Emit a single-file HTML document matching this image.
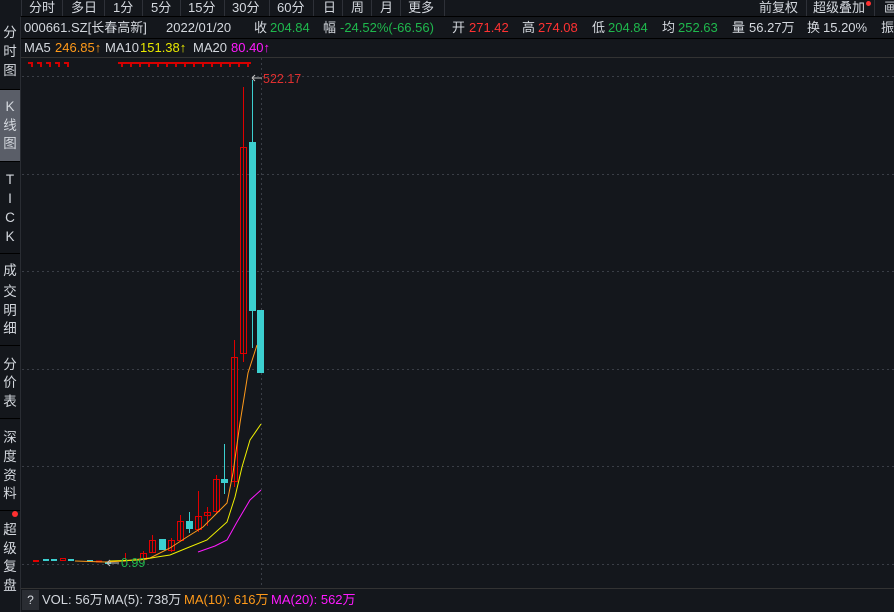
<!DOCTYPE html>
<html><head><meta charset="utf-8"><style>
*{margin:0;padding:0;box-sizing:border-box}
body{width:894px;height:612px;background:#14171c;color:#d4d8de;font-family:"Liberation Sans","Noto Sans CJK SC",sans-serif;font-size:13px;overflow:hidden;position:relative}
.a{position:absolute;white-space:nowrap;line-height:16px}
.g{color:#1fb84d}.r{color:#ff3232}.o{color:#ff9a1a}.y{color:#e8e800}.m{color:#ff1aff}
.sep{position:absolute;top:0;width:1px;height:16px;background:#2e3138}
.sc{position:absolute;left:0;width:20px;text-align:center;font-size:13.5px;line-height:16px}
.hs{position:absolute;left:0;width:20px;height:1px;background:#000}
</style></head><body>
<div class="a" style="left:29px;top:0">分时</div><div class="sep" style="left:62px"></div>
<div class="a" style="left:71px;top:0">多日</div><div class="sep" style="left:104px"></div>
<div class="a" style="left:113px;top:0">1分</div><div class="sep" style="left:142px"></div>
<div class="a" style="left:151px;top:0">5分</div><div class="sep" style="left:180px"></div>
<div class="a" style="left:188px;top:0">15分</div><div class="sep" style="left:224px"></div>
<div class="a" style="left:232px;top:0">30分</div><div class="sep" style="left:269px"></div>
<div class="a" style="left:277px;top:0">60分</div><div class="sep" style="left:313px"></div>
<div class="a" style="left:323px;top:0">日</div><div class="sep" style="left:342px"></div>
<div class="a" style="left:351px;top:0">周</div><div class="sep" style="left:371px"></div>
<div class="a" style="left:380px;top:0">月</div><div class="sep" style="left:400px"></div>
<div class="a" style="left:408px;top:0">更多</div><div class="sep" style="left:444px"></div>
<div class="sep" style="left:21px"></div>
<div class="a" style="left:759px;top:0">前复权</div><div class="sep" style="left:806px"></div>
<div class="a" style="left:813px;top:0">超级叠加</div>
<div style="position:absolute;left:866px;top:1px;width:5px;height:5px;border-radius:50%;background:#ff3030"></div>
<div class="sep" style="left:874px"></div>
<div class="a" style="left:884px;top:0">画</div>
<div style="position:absolute;left:21px;top:16px;width:873px;height:1px;background:#000"></div>

<div style="position:absolute;left:0;top:17px;width:21px;height:595px;border-right:1px solid #2a2d33"></div>
<div style="position:absolute;left:0;top:90px;width:20px;height:71px;background:#5a5e68"></div>
<div class="hs" style="top:89px"></div><div class="hs" style="top:161px"></div><div class="hs" style="top:253px"></div><div class="hs" style="top:345px"></div><div class="hs" style="top:418px"></div><div class="hs" style="top:510px"></div>
<div class="sc" style="top:25px">分</div><div class="sc" style="top:44px">时</div><div class="sc" style="top:63px">图</div>
<div class="sc" style="top:99px">K</div><div class="sc" style="top:118px">线</div><div class="sc" style="top:136px">图</div>
<div class="sc" style="top:172px">T</div><div class="sc" style="top:191px">I</div><div class="sc" style="top:210px">C</div><div class="sc" style="top:229px">K</div>
<div class="sc" style="top:263px">成</div><div class="sc" style="top:284px">交</div><div class="sc" style="top:303px">明</div><div class="sc" style="top:321px">细</div>
<div class="sc" style="top:357px">分</div><div class="sc" style="top:375px">价</div><div class="sc" style="top:394px">表</div>
<div class="sc" style="top:430px">深</div><div class="sc" style="top:449px">度</div><div class="sc" style="top:468px">资</div><div class="sc" style="top:486px">料</div>
<div class="sc" style="top:522px">超</div><div class="sc" style="top:541px">级</div><div class="sc" style="top:559px">复</div><div class="sc" style="top:578px">盘</div>
<div style="position:absolute;left:12px;top:511px;width:6px;height:6px;border-radius:50%;background:#ff3030"></div>

<div class="a" style="left:24px;top:20px">000661.SZ[长春高新]</div>
<div class="a" style="left:166px;top:20px">2022/01/20</div>
<div class="a" style="left:254px;top:20px">收</div><div class="a g" style="left:270px;top:20px">204.84</div>
<div class="a" style="left:323px;top:20px">幅</div><div class="a g" style="left:340px;top:20px">-24.52%(-66.56)</div>
<div class="a" style="left:452px;top:20px">开</div><div class="a r" style="left:469px;top:20px">271.42</div>
<div class="a" style="left:522px;top:20px">高</div><div class="a r" style="left:538px;top:20px">274.08</div>
<div class="a" style="left:592px;top:20px">低</div><div class="a g" style="left:608px;top:20px">204.84</div>
<div class="a" style="left:662px;top:20px">均</div><div class="a g" style="left:678px;top:20px">252.63</div>
<div class="a" style="left:732px;top:20px">量</div><div class="a" style="left:749px;top:20px">56.27万</div>
<div class="a" style="left:807px;top:20px">换</div><div class="a" style="left:823px;top:20px">15.20%</div>
<div class="a" style="left:881px;top:20px">振</div>
<div style="position:absolute;left:21px;top:38px;width:873px;height:1px;background:#000"></div>
<div class="a" style="left:24px;top:40px">MA5</div><div class="a o" style="left:55px;top:40px">246.85↑</div>
<div class="a" style="left:105px;top:40px">MA10</div><div class="a y" style="left:140px;top:40px">151.38↑</div>
<div class="a" style="left:193px;top:40px">MA20</div><div class="a m" style="left:231px;top:40px">80.40↑</div>
<div style="position:absolute;left:21px;top:57px;width:873px;height:1px;background:#333"></div>
<svg style="position:absolute;left:0;top:0" width="894" height="612">
<g stroke="#3a3e46" stroke-dasharray="2,3" stroke-width="1">
<line x1="22" y1="76.5" x2="894" y2="76.5"/><line x1="22" y1="174.5" x2="894" y2="174.5"/><line x1="22" y1="271.5" x2="894" y2="271.5"/><line x1="22" y1="369.5" x2="894" y2="369.5"/><line x1="22" y1="466.5" x2="894" y2="466.5"/><line x1="22" y1="564.5" x2="894" y2="564.5"/><line x1="261.5" y1="58" x2="261.5" y2="588"/>
</g>
<g fill="#d40000">
<rect x="28" y="62" width="5" height="2"/><rect x="31" y="62" width="2" height="5"/>
<rect x="37" y="62" width="5" height="2"/><rect x="40" y="62" width="2" height="5"/>
<rect x="46" y="62" width="5" height="2"/><rect x="49" y="62" width="2" height="5"/>
<rect x="55" y="62" width="5" height="2"/><rect x="58" y="62" width="2" height="5"/>
<rect x="64" y="62" width="5" height="2"/><rect x="67" y="62" width="2" height="5"/>
<rect x="118" y="62" width="133" height="2"/>
<rect x="121" y="62" width="2" height="5"/><rect x="130" y="62" width="2" height="5"/><rect x="139" y="62" width="2" height="5"/><rect x="148" y="62" width="2" height="5"/><rect x="157" y="62" width="2" height="5"/><rect x="166" y="62" width="2" height="5"/><rect x="175" y="62" width="2" height="5"/><rect x="184" y="62" width="2" height="5"/><rect x="193" y="62" width="2" height="5"/><rect x="202" y="62" width="2" height="5"/><rect x="211" y="62" width="2" height="5"/><rect x="220" y="62" width="2" height="5"/><rect x="229" y="62" width="2" height="5"/><rect x="238" y="62" width="2" height="5"/><rect x="247" y="62" width="2" height="5"/>
</g>
<g fill="none" stroke="#e00000" stroke-width="1">
<rect x="33.5" y="560.5" width="5" height="1"/><rect x="60.5" y="558.5" width="5" height="2"/><rect x="96.5" y="561" width="5" height="1"/>
<line x1="125.5" y1="553" x2="125.5" y2="561"/>
<line x1="143.5" y1="551" x2="143.5" y2="562"/><rect x="140.5" y="553.5" width="6" height="6"/>
<line x1="152.5" y1="535" x2="152.5" y2="553"/><rect x="149.5" y="540.5" width="6" height="12"/>
<line x1="171.5" y1="538" x2="171.5" y2="552"/><rect x="168.5" y="540.5" width="6" height="10"/>
<line x1="180.5" y1="515" x2="180.5" y2="540"/><rect x="177.5" y="521.5" width="6" height="19"/>
<line x1="198.5" y1="491" x2="198.5" y2="532"/><rect x="195.5" y="516.5" width="6" height="13"/>
<line x1="207.5" y1="507" x2="207.5" y2="526"/><rect x="204.5" y="512.5" width="6" height="3"/>
<line x1="216.5" y1="475" x2="216.5" y2="514"/><rect x="213.5" y="479.5" width="6" height="32"/>
<line x1="234.5" y1="340" x2="234.5" y2="487"/><rect x="231.5" y="357.5" width="6" height="124"/>
<line x1="243.5" y1="87" x2="243.5" y2="362"/><rect x="240.5" y="147.5" width="6" height="206"/>
</g>
<g fill="#3ccfcf">
<rect x="43" y="559" width="6" height="2"/><rect x="51" y="559" width="6" height="2"/><rect x="68" y="559" width="6" height="2"/><rect x="87" y="560" width="6" height="2"/><rect x="105" y="562" width="6" height="2"/>
<rect x="159" y="539" width="7" height="11"/>
<rect x="186" y="521" width="7" height="8"/><rect x="189" y="512" width="1" height="21"/>
<rect x="221" y="479" width="7" height="4"/><rect x="224" y="444" width="1" height="50"/>
<rect x="249" y="142" width="7" height="169"/><rect x="252" y="80" width="1" height="268"/>
<rect x="257" y="310" width="7" height="63"/>
</g>
<polyline fill="none" stroke="#ff9a1a" stroke-width="1" points="75,561 105,562 125,561 140,559 150,558 170,548 187,537 203,527 217,513 227,503 233,473 240,423 248,373 257,345"/>
<polyline fill="none" stroke="#f0f000" stroke-width="1" points="110,561 140,560 157,557 170,555 187,548 207,540 227,522 235,497 242,467 250,440 261,424"/>
<polyline fill="none" stroke="#ff1aff" stroke-width="1" points="198,552 215,546 227,540 237,522 250,500 261,490"/>
<path d="M252 78 h10 M252 78 l3 -3 M252 78 l3 3" stroke="#c0c0c0" fill="none"/>
<text x="263" y="83" fill="#e03030" font-size="12.5" font-family="Liberation Sans">522.17</text>
<path d="M107 563 h12 M107 563 l3 -3 M107 563 l3 3" stroke="#c0c0c0" fill="none"/>
<text x="121" y="567" fill="#1fb84d" font-size="12.5" font-family="Liberation Sans">0.99</text>
</svg>
<div style="position:absolute;left:21px;top:588px;width:873px;height:1px;background:#333"></div>
<div style="position:absolute;left:22px;top:590px;width:17px;height:20px;background:#2a2d33;text-align:center;line-height:20px;font-size:12px">?</div>
<div class="a" style="left:42px;top:592px">VOL: 56万</div>
<div class="a" style="left:104px;top:592px">MA(5): 738万</div>
<div class="a o" style="left:184px;top:592px">MA(10): 616万</div>
<div class="a m" style="left:271px;top:592px">MA(20): 562万</div>
</body></html>
